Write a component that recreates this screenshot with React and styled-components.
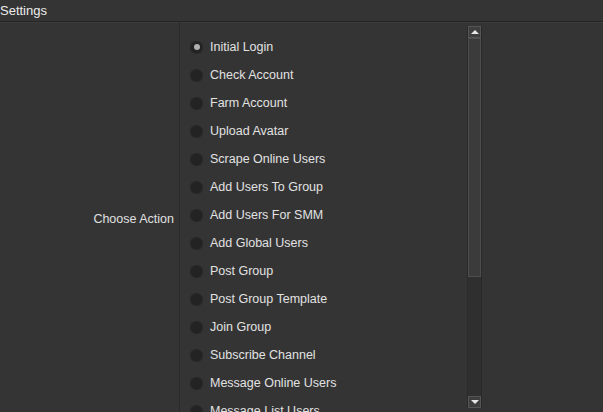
import React from "react";
import styled, { createGlobalStyle } from "styled-components";

const GlobalStyle = createGlobalStyle`
  html, body { margin: 0; padding: 0; background: #343434; }
  body { font-family: "Liberation Sans", Tahoma, sans-serif; }
`;

const actions = [
  "Initial Login",
  "Check Account",
  "Farm Account",
  "Upload Avatar",
  "Scrape Online Users",
  "Add Users To Group",
  "Add Users For SMM",
  "Add Global Users",
  "Post Group",
  "Post Group Template",
  "Join Group",
  "Subscribe Channel",
  "Message Online Users",
  "Message List Users",
  "Message Group Users",
];

const Window = styled.div`
  width: 603px;
  height: 412px;
  background: #343434;
  color: #dedede;
  font-size: 12.5px;
  overflow: hidden;
  display: flex;
  flex-direction: column;
`;

const Header = styled.div`
  height: 21px;
  line-height: 22px;
  font-size: 13px;
  color: #ececec;
  border-bottom: 1px solid #242424;
  box-shadow: 0 1px 0 #3c3c3c;
  flex-shrink: 0;
`;

const Body = styled.div`
  flex: 1;
  display: flex;
  min-height: 0;
`;

const LabelCol = styled.div`
  width: 180px;
  display: flex;
  align-items: center;
  justify-content: flex-end;
  padding: 3px 5px 0 0;
  box-sizing: border-box;
  border-right: 1px solid #2a2a2a;
  color: #e0e0e0;
`;

const ListArea = styled.div`
  flex: 1;
  display: flex;
  min-height: 0;
  overflow: hidden;
`;

const RadioList = styled.div`
  width: 277px;
  padding: 11px 0 0 10px;
  display: flex;
  flex-direction: column;
`;

const Row = styled.label`
  height: 28px;
  display: flex;
  align-items: center;
  gap: 7px;
  flex-shrink: 0;
  white-space: nowrap;
  color: #e2e2e2;
`;

const Dot = styled.span`
  width: 13px;
  height: 13px;
  border-radius: 50%;
  background: #232323;
  box-shadow: inset 0 0 0 1px #2a2a2a;
  display: flex;
  align-items: center;
  justify-content: center;
  flex-shrink: 0;

  &::after {
    content: "";
    width: 6px;
    height: 6px;
    border-radius: 50%;
    background: ${(p) => (p.$checked ? "#b0b0b0" : "transparent")};
  }
`;

const Scrollbar = styled.div`
  width: 15px;
  margin: 4px 0 4px 0;
  display: flex;
  flex-direction: column;
  background: #2f2f2f;
  border-left: 1px solid #2a2a2a;
  border-right: 1px solid #2a2a2a;
  box-sizing: border-box;
`;

const ArrowBtn = styled.div`
  height: 12px;
  background: #3e3e3e;
  border: 1px solid #555;
  box-sizing: border-box;
  display: flex;
  align-items: center;
  justify-content: center;
  flex-shrink: 0;

  &::before {
    content: "";
    width: 0;
    height: 0;
    border-left: 4px solid transparent;
    border-right: 4px solid transparent;
    ${(p) =>
      p.$down
        ? "border-top: 4px solid #e8e8e8;"
        : "border-bottom: 4px solid #e8e8e8;"}
  }
`;

const Thumb = styled.div`
  height: 239px;
  background: #3b3b3b;
  border: 1px solid #4e4e4e;
  box-sizing: border-box;
  flex-shrink: 0;
`;

const Track = styled.div`
  flex: 1;
`;

export default function App() {
  return (
    <>
      <GlobalStyle />
      <Window>
        <Header>Settings</Header>
        <Body>
          <LabelCol>Choose Action</LabelCol>
          <ListArea>
            <RadioList>
              {actions.map((a, i) => (
                <Row key={a}>
                  <Dot $checked={i === 0} />
                  {a}
                </Row>
              ))}
            </RadioList>
            <Scrollbar>
              <ArrowBtn />
              <Thumb />
              <Track />
              <ArrowBtn $down />
            </Scrollbar>
          </ListArea>
        </Body>
      </Window>
    </>
  );
}
